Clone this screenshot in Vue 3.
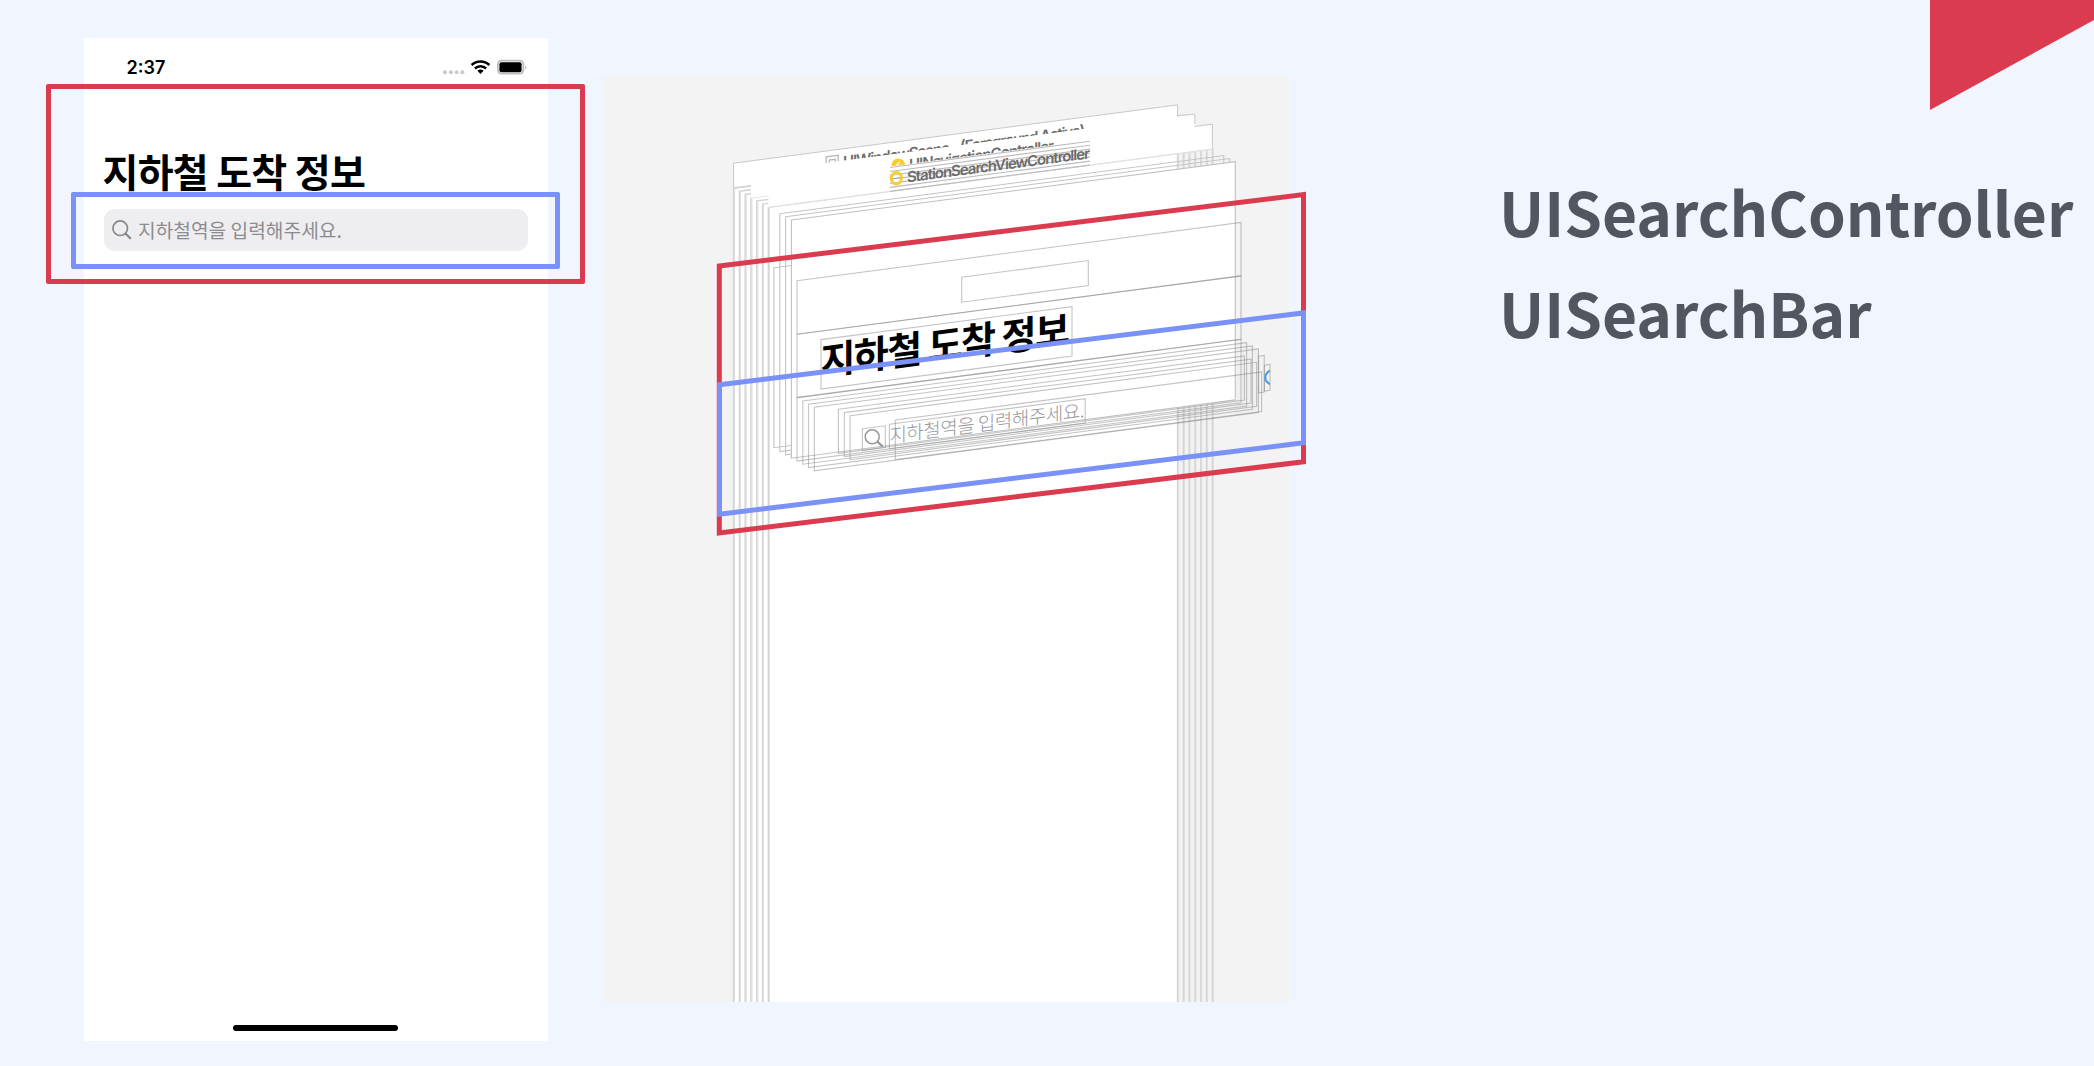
<script setup>
const SLOPE = 0.1313

// Outline of a sheared layer, given both left corners and the right edge.
const sheet = (x1, top, bottom, x2) => {
  const dy = (x2 - x1) * SLOPE
  return `M${x1} ${top}L${x2} ${top - dy}V${bottom - dy}L${x1} ${bottom}Z`
}
const layerX = (i) => 733.6 + 5.8 * i
const slant = (x, y) => `matrix(1 ${-SLOPE} 0 1 ${x} ${y})`

const back = [0, 1, 2, 3, 4, 5, 6].map((i) => ({
  x: layerX(i),
  right: layerX(i) + 444,
  top: 188 + 3.22 * i,
}))
const tab = (i) => sheet(layerX(i), 163.2 + 3.22 * i, 188.4 + 3.22 * i, layerX(i) + 444)
const rightTop = (p) => p.top - 444 * SLOPE

const barLayers = [
  sheet(797, 280.7, 334.2, 1241),
  sheet(797, 334.2, 397.6, 1241),
  sheet(797, 397.6, 461, 1241),
  sheet(802.8, 401, 464.2, 1246.6),
  sheet(808.5, 404.2, 467.5, 1252.4),
  sheet(814.3, 407.3, 470.8, 1258.4),
  sheet(838.4, 409.3, 453.3, 1244.4),
  sheet(844.3, 412.6, 456.5, 1251),
  sheet(850.1, 415.7, 459.7, 1256.6),
  sheet(895.3, 420, 459.6, 1261.6),
  sheet(961.7, 277.2, 302.2, 1088.3),
  sheet(821, 339.6, 389, 1072),
  sheet(862.4, 428.8, 450.6, 885.3),
  sheet(889.4, 424.3, 448.7, 1085.2),
  sheet(1258.6, 356.2, 392.8, 1264.2),
  sheet(1264.4, 365.2, 391, 1270),
]
</script>

<template>
  <main class="slide">
    <section class="phone">
      <header class="status">
        <span class="time">2:37</span>
        <svg class="status-icons" width="86" height="18" viewBox="0 0 86 18">
          <g fill="#c9c9cb">
            <circle cx="4" cy="14.2" r="2" /><circle cx="9.9" cy="14.2" r="2" />
            <circle cx="15.6" cy="14.2" r="2" /><circle cx="21.4" cy="14.2" r="2" />
          </g>
          <g fill="none" stroke="#000" stroke-width="2.6">
            <path d="M30.6 7a13 13 0 0 1 17.8 0" />
            <path d="M33.9 10.5a8.2 8.2 0 0 1 11.2 0" />
          </g>
          <path d="M36.4 12.7a4.8 4.8 0 0 1 6.2 0L39.5 16z" />
          <rect x="56.9" y="2.7" width="25.4" height="13" rx="3.6" fill="#fff" stroke="#bdbdbf" stroke-width="1.8" />
          <rect x="58.4" y="4.2" width="22.2" height="10" rx="2" />
          <path d="M84.3 7.2q2 2 0 4.4z" fill="#aaa" />
        </svg>
      </header>
      <h1 class="title">지하철 도착 정보</h1>
      <div class="search">
        <svg width="20" height="20" viewBox="0 0 20 20" fill="none" stroke="#87878b">
          <circle cx="8.2" cy="8.2" r="7.3" stroke-width="1.7" />
          <path d="M13.2 13.3L18.8 18.8" stroke-width="2.2" />
        </svg>
        <span>지하철역을 입력해주세요.</span>
      </div>
      <div class="home"></div>
      <div class="frame frame-red"></div>
      <div class="frame frame-blue"></div>
    </section>

    <section class="layers">
      <svg class="scene" width="720" height="926" viewBox="603 76 720 926">
        <defs>
          <clipPath id="behindThird"><path d="M740 90H1200V113.7L750.7 172.9H740Z" /></clipPath>
          <clipPath id="behindSixth"><path d="M740 90H1220V123.3L768 182.7H740Z" /></clipPath>
          <clipPath id="label"><path d="M890 150L1090 120V170L890 196Z" /></clipPath>
          <clipPath id="field"><rect x="1260" y="364" width="10" height="28" /></clipPath>
        </defs>

        <!-- window stack -->
        <path fill="#fff" d="M733.6 163.2L1177.4 104.8V1002H733.6Z" />
        <path :d="tab(0)" fill="#fff" stroke="#c8c8c8" />
        <g stroke="#d4d4d4" stroke-width="1.5" fill="none">
          <path v-for="p in back" :key="p.x" :d="`M${p.x} 1002V${p.top}L${p.right} ${rightTop(p)}V1002`" />
        </g>
        <g stroke="#dedede" stroke-width="1">
          <path v-for="p in back" :key="p.x" :d="`M${p.x + 1} 1002V${p.top}M${p.right + 1} 1002V${rightTop(p)}`" />
        </g>

        <g clip-path="url(#behindThird)" class="caption">
          <path d="M826.2 156.8L838.2 155.2V167H826.2ZM829.3 160L835.4 159.2V167H829.3Z" fill="none" stroke="#bbb" stroke-width="1.4" />
          <text :transform="slant(843, 167.1)" textLength="242">UIWindowScene - (Foreground Active)</text>
        </g>
        <path :d="tab(3)" fill="#fff" />
        <path d="M1176.9 115.6L1194.8 114.2V124" fill="none" stroke="#c8c8c8" />
        <g clip-path="url(#behindSixth)" class="caption">
          <circle cx="898.4" cy="165.4" r="6.8" fill="#f9cd2b" />
          <path d="M896 165.6L900 161.6" stroke="#fff" stroke-width="1.2" />
          <text :transform="slant(909, 170)" textLength="145">UINavigationController</text>
        </g>
        <path :d="tab(6)" fill="#fff" />
        <path d="M1194.8 126.2V126.5L1212.4 124.1V149" fill="none" stroke="#c8c8c8" />
        <path d="M768.4 207.3L1212.4 149" stroke="#dcdcdc" />
        <g clip-path="url(#label)" stroke="#bcbcbc" stroke-width="1.1">
          <path v-for="p in back" :key="p.x" :d="`M${p.x} ${p.top}L${p.right} ${rightTop(p)}`" />
        </g>
        <ellipse cx="896.4" cy="178.2" rx="5.1" ry="5.8" fill="#fff" fill-opacity=".3" stroke="#f9cd2b" stroke-width="2.8" />
        <path d="M892 178.8L901 177.6" stroke="#aaa" />
        <text class="caption" :transform="slant(907, 182.4)" textLength="183">StationSearchViewController</text>

        <!-- content view -->
        <g fill="none" stroke="#c4c4c4" stroke-width="1.1">
          <path :d="sheet(773.9, 267.7, 447.7, 1218)" />
          <path :d="sheet(779.8, 213.8, 451.5, 1223.8)" />
          <path :d="sheet(785.6, 216.8, 454.8, 1229.6)" />
        </g>
        <path :d="sheet(791.4, 220, 458.2, 1235.3)" fill="#fff" stroke="#c0c0c0" stroke-width="1.1" />
        <path d="M1241 342.3L1258 349.5L1258.4 411.7L1235.3 415V400Z" fill="#eeeef0" fill-opacity=".5" />

        <text class="big" :transform="slant(820.4, 375.3)" textLength="249.5">지하철 도착 정보</text>
        <text class="hint" :transform="slant(889.4, 442.8)" textLength="195">지하철역을 입력해주세요.</text>
        <g fill="none" stroke="#98989c">
          <circle cx="872.2" cy="436.8" r="7" stroke-width="1.5" />
          <path d="M877 441.4L882.6 446.4" stroke-width="2.2" />
        </g>
        <g fill="none" stroke="#8a8a8a" stroke-opacity=".5" stroke-width="1.1">
          <path v-for="d in barLayers" :key="d" :d="d" />
        </g>
        <circle cx="1272.2" cy="377.4" r="6.9" fill="none" stroke="#3f9bf5" stroke-width="2" clip-path="url(#field)" />

        <!-- highlights -->
        <g fill="none" stroke-width="5">
          <path d="M719.3 266L1303.5 194.6V461.8L719.3 533Z" stroke="#da3b4f" />
          <path d="M719.5 384.8L1303.5 312.9V442.8L719.5 514.2Z" stroke="#7a91f8" />
        </g>
      </svg>
    </section>

    <section class="names">
      <p>UISearchController</p>
      <p>UISearchBar</p>
    </section>
    <div class="corner"></div>
  </main>
</template>

<style>
body {
  margin: 0;
  background: #f1f5ff;
}
</style>

<style scoped>
.slide {
  position: relative;
  box-sizing: border-box;
  width: 2094px;
  height: 1066px;
  padding: 38px 0 0 84px;
  display: flex;
  align-items: flex-start;
  overflow: hidden;
  background: #f1f5ff;
}
.phone {
  position: relative;
  box-sizing: border-box;
  width: 464px;
  height: 1003px;
  padding: 0 20px 10px 19.5px;
  display: flex;
  flex-direction: column;
  background: #fff;
}
.status {
  height: 110px;
  padding: 19px 1px 0 23px;
  box-sizing: border-box;
  display: flex;
  justify-content: space-between;
  align-items: flex-start;
}
.time {
  font: 600 18px/21px Inter, sans-serif;
}
.status-icons {
  margin: 1px 0 0;
}
.title {
  margin: 0 0 0 -1px;
  height: 60.5px;
  font: 700 39px/44px "Noto Sans CJK KR", sans-serif;
  letter-spacing: -0.7px;
  white-space: nowrap;
}
.search {
  height: 42px;
  padding-left: 8.5px;
  box-sizing: border-box;
  border-radius: 11px;
  display: flex;
  align-items: center;
  gap: 6px;
  background: #eeeef0;
  color: #8c8c90;
  font: 400 19.2px/28px "Noto Sans CJK KR", sans-serif;
}
.home {
  width: 165px;
  height: 6px;
  margin: auto auto 0;
  border-radius: 3px;
  background: #000;
}
.frame {
  position: absolute;
  box-sizing: border-box;
  border: 5px solid;
  border-radius: 2px;
}
.frame-red {
  left: -38px;
  top: 46px;
  width: 539px;
  height: 200px;
  border-color: #da3b4f;
}
.frame-blue {
  left: -13px;
  top: 154px;
  width: 489px;
  height: 77px;
  border-color: #7a91f8;
}
.layers {
  width: 686px;
  height: 926px;
  margin: 38px 0 0 55px;
  background: #f3f3f3;
}
.scene {
  display: block;
}
.caption {
  font: 600 15px Inter, sans-serif;
  fill: #6c6c6c;
}
.big {
  font: 700 38px "Noto Sans CJK KR", sans-serif;
}
.hint {
  font: 300 19px "Noto Sans CJK KR", sans-serif;
  fill: #98989c;
}
.names {
  margin: 122px 0 0 210px;
  color: #53565e;
  font: 700 60.5px/101px "Noto Sans CJK KR", sans-serif;
}
.names p {
  margin: 0;
}
.corner {
  position: absolute;
  top: 0;
  right: 0;
  width: 164px;
  height: 110px;
  background: #da3b4e;
  clip-path: polygon(0 0, 100% 0, 100% 20px, 0 100%);
}
</style>
